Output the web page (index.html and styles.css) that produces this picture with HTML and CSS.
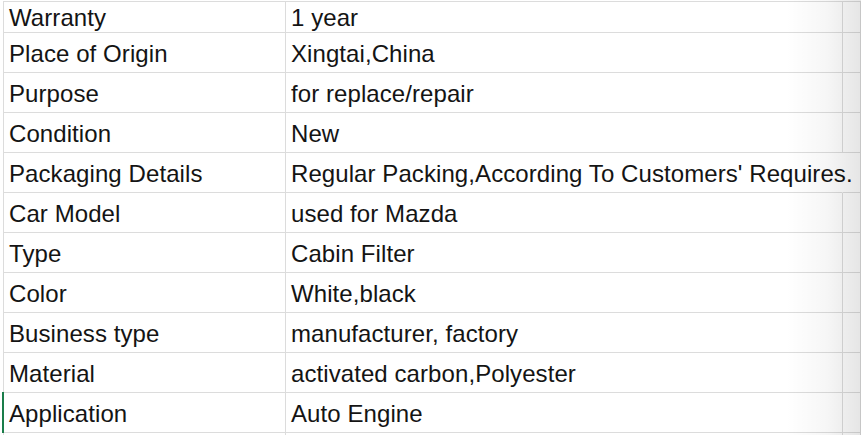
FILE: index.html
```html
<!DOCTYPE html>
<html>
<head>
<meta charset="utf-8">
<link rel="stylesheet" href="styles.css">
</head>
<body>
<div class="sheet">
  <div class="grid">
    <div class="c k first">Warranty</div><div class="c v first">1 year</div><div class="c x first"></div>
    <div class="c k">Place of Origin</div><div class="c v">Xingtai,China</div><div class="c x"></div>
    <div class="c k">Purpose</div><div class="c v">for replace/repair</div><div class="c x"></div>
    <div class="c k">Condition</div><div class="c v">New</div><div class="c x"></div>
    <div class="c k">Packaging Details</div><div class="c v overflow">Regular Packing,According To Customers' Requires.</div><div class="c x"></div>
    <div class="c k">Car Model</div><div class="c v">used for Mazda</div><div class="c x"></div>
    <div class="c k">Type</div><div class="c v">Cabin Filter</div><div class="c x"></div>
    <div class="c k">Color</div><div class="c v">White,black</div><div class="c x"></div>
    <div class="c k">Business type</div><div class="c v">manufacturer, factory</div><div class="c x"></div>
    <div class="c k">Material</div><div class="c v">activated carbon,Polyester</div><div class="c x"></div>
    <div class="c k selected">Application</div><div class="c v">Auto Engine</div><div class="c x"></div>
    <div class="c k"></div><div class="c v"></div><div class="c x"></div>
  </div>
  <div class="shade"></div>
</div>
</body>
</html>
```

FILE: styles.css
```css
html, body {
  margin: 0;
  padding: 0;
  background: #ffffff;
}
body {
  width: 861px;
  height: 435px;
  overflow: hidden;
  font-family: "Liberation Sans", Arial, sans-serif;
  font-size: 24px;
  letter-spacing: 0.08px;
  color: #141414;
}
.sheet {
  position: relative;
  width: 861px;
  height: 435px;
  overflow: hidden;
}
.grid {
  display: grid;
  grid-template-columns: 282px 557px 1fr;
  margin-top: 1px;
  margin-left: 3px;
  border-top: 1px solid #dcdcdc;
  border-left: 1px solid #dcdcdc;
}
.c {
  box-sizing: border-box;
  height: 40px;
  padding: 2px 0 0 5px;
  line-height: 37px;
  border-right: 1px solid #dcdcdc;
  border-bottom: 1px solid #dcdcdc;
  white-space: nowrap;
  position: relative;
}
.c.first {
  height: 31px;
  padding-top: 1px;
  line-height: 29px;
}
.v {
  padding-left: 5px;
}
.overflow {
  border-right-color: transparent;
  overflow: visible;
  z-index: 1;
}
.selected::before {
  content: "";
  position: absolute;
  left: -2px;
  top: -1px;
  bottom: -1px;
  width: 2px;
  background: #1a7d4a;
}
.shade {
  position: absolute;
  top: 0;
  right: 0;
  width: 75px;
  height: 100%;
  background: linear-gradient(to right, rgba(0,0,0,0) 0%, rgba(0,0,0,0.035) 55%, rgba(0,0,0,0.1) 100%);
  pointer-events: none;
  z-index: 2;
}
```
